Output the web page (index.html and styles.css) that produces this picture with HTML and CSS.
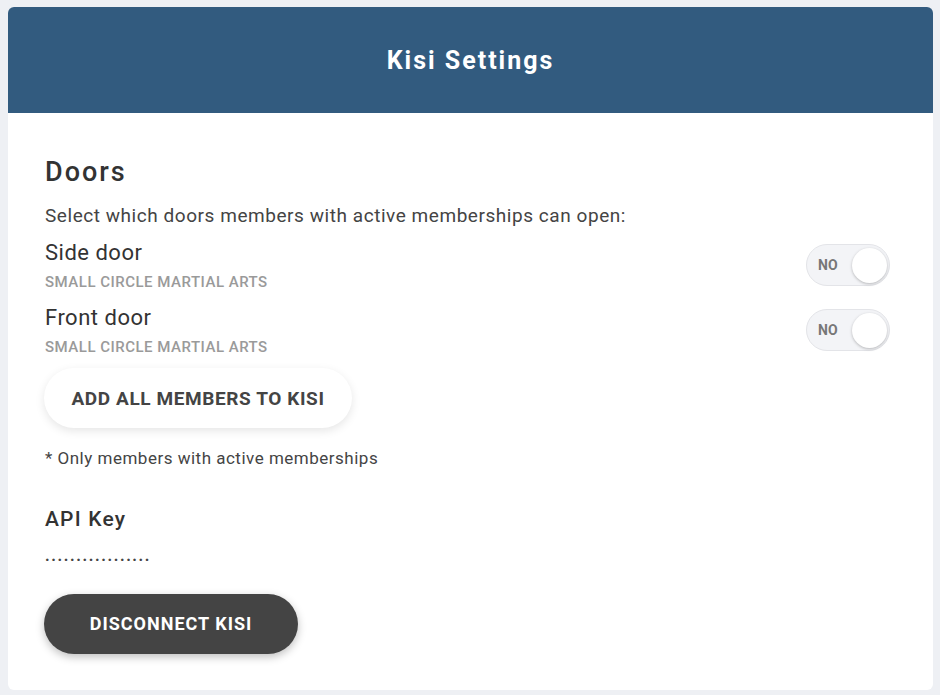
FILE: index.html
```html
<!DOCTYPE html>
<html>
<head>
<meta charset="utf-8">
<link rel="stylesheet" href="styles.css">
</head>
<body>
<div class="card">
  <div class="card-header">Kisi Settings</div>
  <div class="card-body">
    <h2 class="section-title">Doors</h2>
    <p class="desc">Select which doors members with active memberships can open:</p>
    <div class="door">
      <div class="door-info">
        <div class="door-name">Side door</div>
        <div class="door-org">SMALL CIRCLE MARTIAL ARTS</div>
      </div>
      <div class="toggle"><span class="toggle-label">NO</span><span class="knob"></span></div>
    </div>
    <div class="door">
      <div class="door-info">
        <div class="door-name">Front door</div>
        <div class="door-org">SMALL CIRCLE MARTIAL ARTS</div>
      </div>
      <div class="toggle"><span class="toggle-label">NO</span><span class="knob"></span></div>
    </div>
    <button class="btn btn-light">ADD ALL MEMBERS TO KISI</button>
    <p class="note">* Only members with active memberships</p>
    <h3 class="api-title">API Key</h3>
    <div class="api-key">.................</div>
    <button class="btn btn-dark">DISCONNECT KISI</button>
  </div>
</div>
</body>
</html>
```
FILE: styles.css
```css
html, body {
  margin: 0;
  padding: 0;
  background: #eef0f4;
  font-family: Roboto, "Liberation Sans", sans-serif;
}
.card {
  margin: 7px 7px 0 8px;
  height: 683px;
  background: #ffffff;
  border-radius: 6px;
  overflow: hidden;
  box-sizing: border-box;
}
.card-header {
  height: 106px;
  background: #325b7f;
  color: #ffffff;
  display: flex;
  align-items: center;
  justify-content: center;
  font-size: 25px;
  font-weight: 700;
  letter-spacing: 2px;
  box-sizing: border-box;
}
.card-body {
  padding: 34px 43px 0 37px;
}
.section-title {
  margin: 0;
  font-size: 27px;
  font-weight: 500;
  color: #333333;
  letter-spacing: 2px;
  line-height: 50px;
}
.desc {
  margin: 0;
  font-size: 19px;
  letter-spacing: 0.55px;
  color: #444444;
  line-height: 38px;
}
.door {
  display: flex;
  align-items: center;
  justify-content: space-between;
  height: 65px;
}
.door-info {
  display: flex;
  flex-direction: column;
}
.door-name {
  font-size: 22px;
  letter-spacing: 0.5px;
  color: #333333;
  line-height: 28px;
}
.door-org {
  font-size: 15px;
  letter-spacing: 0.5px;
  font-weight: 500;
  color: #9a9a9a;
  line-height: 28px;
  margin-top: 1px;
}
.toggle {
  width: 84px;
  height: 42px;
  box-sizing: border-box;
  border: 1px solid #e3e4e8;
  border-radius: 21px;
  background: #f3f4f7;
  display: flex;
  align-items: center;
  justify-content: space-between;
  padding: 0 2px 0 11px;
  margin-top: -5px;
}
.toggle-label {
  font-size: 14px;
  font-weight: 700;
  color: #777777;
}
.knob {
  width: 35px;
  height: 35px;
  border-radius: 50%;
  background: #ffffff;
  box-shadow: 0 1px 3px rgba(0,0,0,0.25);
}
.btn {
  display: block;
  border: none;
  border-radius: 30px;
  height: 60px;
  font-family: Roboto, "Liberation Sans", sans-serif;
  font-weight: 700;
  cursor: pointer;
}
.btn-light {
  margin-top: 3px;
  width: 308px;
  margin-left: -1px;
  background: #ffffff;
  color: #444444;
  font-size: 19px;
  letter-spacing: 0.6px;
  box-shadow: 0 3px 10px rgba(0,0,0,0.10);
}
.note {
  margin: 18px 0 0 0;
  font-size: 17px;
  letter-spacing: 0.5px;
  color: #444444;
  line-height: 24px;
}
.api-title {
  margin: 35px 0 0 0;
  font-size: 21px;
  letter-spacing: 1.2px;
  font-weight: 500;
  color: #333333;
  line-height: 28px;
}
.api-key {
  margin-top: 13px;
  font-size: 16px;
  font-weight: 700;
  letter-spacing: 1.6px;
  color: #444444;
  line-height: 20px;
}
.btn-dark {
  margin-top: 28px;
  margin-left: -1px;
  width: 254px;
  background: #444444;
  color: #ffffff;
  font-size: 18px;
  letter-spacing: 1px;
  padding-bottom: 3px;
  box-shadow: 0 3px 8px rgba(0,0,0,0.25);
}
```
